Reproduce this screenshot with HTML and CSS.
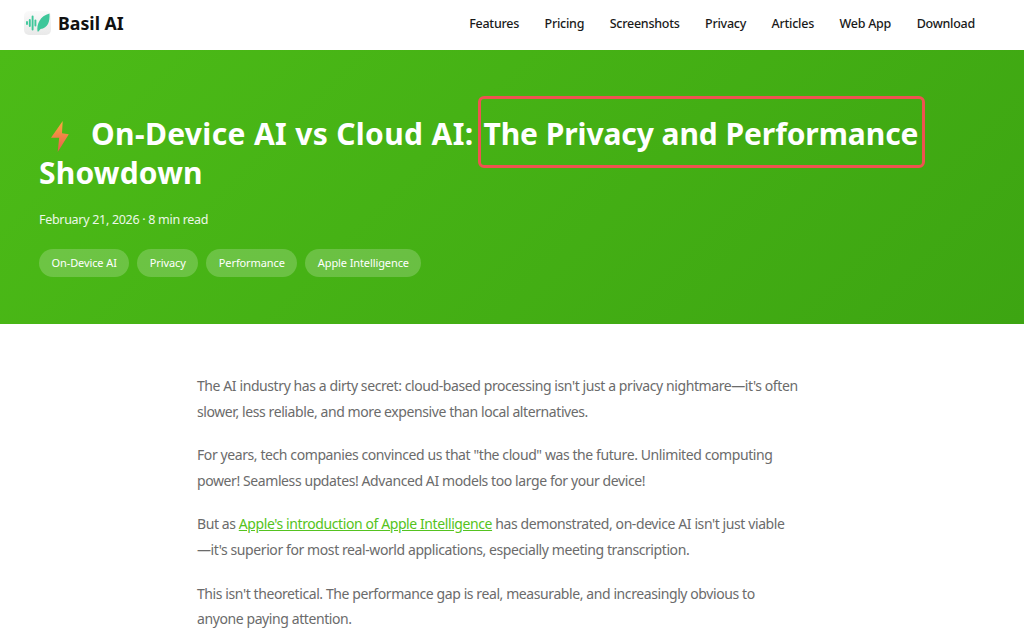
FILE: index.html
```html
<!DOCTYPE html>
<html lang="en">

<head>
    <meta charset="UTF-8">
    <meta name="viewport" content="width=device-width, initial-scale=1.0">
    <title>On-Device AI vs Cloud AI</title>
    <link rel="stylesheet" href="styles.css">
</head>

<body>

    <header class="site-header">
        <a class="brand" href="#">
            <span class="brand-icon">
                <svg width="24" height="20" viewBox="0 0 24 20">
                    <g stroke="#3ec79a" stroke-width="1.9" stroke-linecap="round">
                        <path d="M1 9v2"/>
                        <path d="M3.800 7v6"/>
                        <path d="M6.600 3.500v13"/>
                        <path d="M9.400 7.500v5"/>
                    </g>
                    <path d="M11.500 18.500C10.500 11 14 3 23.500 .5c.5 8-1.500 14.500-9 15.500l-2 2.500z" fill="#3ec79a"/>
                </svg>
            </span>
            <span class="brand-name">Basil AI</span>
        </a>
        <nav class="main-nav">
            <a href="#">Features</a>
            <a href="#">Pricing</a>
            <a href="#">Screenshots</a>
            <a href="#">Privacy</a>
            <a href="#">Articles</a>
            <a href="#">Web App</a>
            <a href="#">Download</a>
        </nav>
    </header>

    <section class="hero">
        <h1>
            <svg class="bolt" width="18" height="31" viewBox="0 0 18 31">
                <defs>
                    <linearGradient id="boltFill" x1="0" y1="0" x2="0" y2="1">
                        <stop offset="0" stop-color="#fbab3f"/>
                        <stop offset="1" stop-color="#e85a4f"/>
                    </linearGradient>
                </defs>
                <path d="M11.700 0 0 16.700h8.200L6.700 31 17.800 13.300l-6.800-1z" fill="url(#boltFill)"/>
            </svg>
            <span class="lead">On-Device AI vs Cloud AI:</span> <span class="highlight">The Privacy and Performance</span> Showdown
        </h1>
        <p class="meta">February 21, 2026 · 8 min read</p>
        <div class="tags">
            <span class="tag">On-Device AI</span>
            <span class="tag">Privacy</span>
            <span class="tag">Performance</span>
            <span class="tag">Apple Intelligence</span>
        </div>
    </section>

    <main class="article">
        <p>The AI industry has a dirty secret: cloud-based processing isn't just a privacy nightmare—it's often slower, less reliable, and more expensive than local alternatives.</p>
        <p>For years, tech companies convinced us that "the cloud" was the future. Unlimited computing power! Seamless updates! Advanced AI models too large for your device!</p>
        <p>But as <a href="#">Apple's introduction of Apple Intelligence</a> has demonstrated, on-device AI isn't just viable<br>—it's superior for most real-world applications, especially meeting transcription.</p>
        <p>This isn't theoretical. The performance gap is real, measurable, and increasingly obvious to anyone paying attention.</p>
    </main>

</body>

</html>
```

FILE: styles.css
```css
body {
    font-family: 'Noto Sans', sans-serif;
    margin: 0;
    background: #fff;
    overflow-x: hidden;
}

.site-header {
    height: 50px;
    box-sizing: border-box;
    display: flex;
    align-items: center;
    justify-content: space-between;
    padding: 0 49px 4px 24px;
}

.brand {
    display: flex;
    align-items: center;
    gap: 7px;
    color: #111;
    text-decoration: none;
}

.brand-icon {
    width: 27px;
    height: 24px;
    display: flex;
    align-items: center;
    justify-content: center;
    background: linear-gradient(#fafafa, #e9e9e9);
    border-radius: 5px;
}

.brand-name {
    font-size: 17.750px;
    font-weight: 700;
}

.main-nav {
    display: flex;
    gap: 25.500px;
}

.main-nav a {
    color: #1a1a1a;
    font-size: 12.500px;
    font-weight: 500;
    letter-spacing: -0.25px;
    text-decoration: none;
}

.hero {
    height: 274px;
    box-sizing: border-box;
    padding: 64px 39px 0;
    color: #fff;
    background: linear-gradient(135deg, #4cbb17, #3da512);
}

.hero h1 {
    margin: 0;
    font-size: 30px;
    line-height: 39px;
    font-weight: 700;
    letter-spacing: 0.2px;
}

.bolt {
    margin: 0 14px 0 12px;
    vertical-align: -7px;
}

.lead {
    letter-spacing: 0.35px;
}

/* red box sits over the text, it should not push the words apart */
.highlight {
    outline: 3px solid #ef5350;
    border-radius: 3px;
    padding: 14px 4px 11px 2px;
    margin: 0 -4px 0 0;
    letter-spacing: -0.08px;
}

.meta {
    margin: 18px 0 0;
    font-size: 12.500px;
    letter-spacing: -0.3px;
    line-height: 20px;
    opacity: 0.9;
}

.tags {
    display: flex;
    gap: 8px;
    margin-top: 19px;
}

.tag {
    padding: 0 12.500px;
    height: 28px;
    line-height: 28px;
    font-size: 11px;
    letter-spacing: -0.1px;
    border-radius: 14px;
    background: rgba(255, 255, 255, 0.2);
}

.article {
    width: 606px;
    margin-left: 197px;
    padding-top: 49px;
    color: #6b6b6b;
    font-size: 14px;
    letter-spacing: -0.41px;
    line-height: 25.500px;
}

.article p {
    margin: 0 0 18.200px;
}

.article a {
    color: #55c320;
}
```
